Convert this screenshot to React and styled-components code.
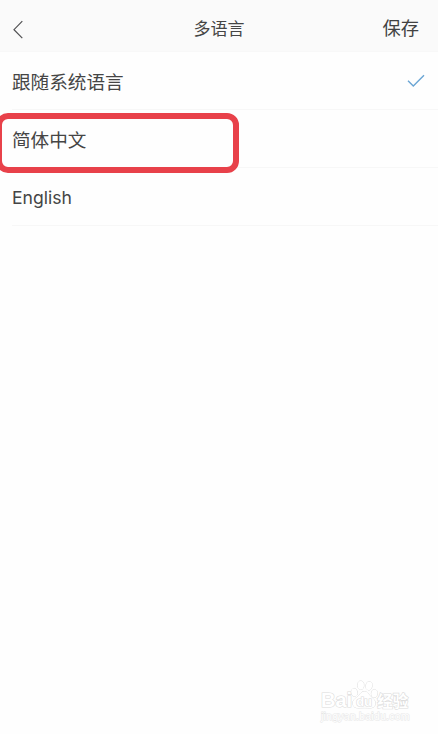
import React from "react";
import styled, { createGlobalStyle } from "styled-components";

const languages = [
  { id: "system", label: "跟随系统语言", selected: true },
  { id: "zh", label: "简体中文", marked: true },
  { id: "en", label: "English", latin: true },
];

const App = () => {
  return (
    <Page>
      <GlobalStyle />
      <Header>
        <BackButton aria-label="返回">
          <svg width="12" height="20" viewBox="0 0 12 20">
            <path d="M10.3 1.2L2 9.7L10.3 18.2" fill="none" stroke="#505052" strokeWidth="1.2" />
          </svg>
        </BackButton>
        <Title>多语言</Title>
        <SaveButton>保存</SaveButton>
      </Header>
      <List>
        {languages.map((language) => (
          <Row key={language.id}>
            <Label $latin={language.latin}>{language.label}</Label>
            {language.selected && (
              <svg width="18" height="14" viewBox="0 0 18 14">
                <path d="M1 6.7L6.3 12L17 1.2" fill="none" stroke="#6aa5d4" strokeWidth="1.4" />
              </svg>
            )}
            {language.marked && <Marker />}
          </Row>
        ))}
      </List>
      <Watermark>
        <Brand>
          <BrandText>Bai</BrandText>
          <Paw>
            <svg width="28" height="29" viewBox="0 0 28 29">
              <g fill="#fff" stroke="#d8d8d8" strokeWidth="0.9">
                <ellipse cx="4.3" cy="12.5" rx="3" ry="4" transform="rotate(-12 4.3 12.5)" />
                <ellipse cx="10.8" cy="5.2" rx="3.1" ry="4.2" />
                <ellipse cx="19" cy="5.8" rx="3.1" ry="4.2" transform="rotate(12 19 5.8)" />
                <ellipse cx="24.3" cy="13.5" rx="3" ry="4" transform="rotate(8 24.3 13.5)" />
                <path d="M14.3 11.5C10.7 11.5 9.8 15.3 6.6 17.5C3.2 20 1.9 22 3.3 25.4C4.8 29 9.5 27.8 14.2 27.8C18.9 27.8 23.2 29 24.8 25.5C26.2 22.2 24.8 19.9 21.7 17.5C18.9 15.2 17.8 11.5 14.3 11.5Z" />
              </g>
            </svg>
            <PawText>du</PawText>
          </Paw>
          <BrandText $chinese>经验</BrandText>
        </Brand>
        <Site>jingyan.baidu.com</Site>
      </Watermark>
    </Page>
  );
};

export default App;

const GlobalStyle = createGlobalStyle`
  * {
    box-sizing: border-box;
  }
  body {
    margin: 0;
    background: #fefefe;
    font-family: "Noto Sans CJK SC", sans-serif;
    color: #454545;
  }
`;

const Page = styled.div`
  position: relative;
  height: 734px;
  overflow: hidden;
`;

const Header = styled.header`
  display: grid;
  grid-template-columns: 1fr auto 1fr;
  align-items: center;
  height: 52px;
  padding: 4px 19px 0 12px;
  background: #fafafa;
  border-bottom: 1px solid #f8f8f8;
`;

const BackButton = styled.button`
  display: flex;
  padding: 4px 0 0;
  border: 0;
  background: none;
`;

const Title = styled.h1`
  margin: 0 0 0 7px;
  font-size: 17px;
  font-weight: 400;
  line-height: 26px;
`;

const SaveButton = styled.button`
  justify-self: end;
  padding: 0 0 1px;
  border: 0;
  background: none;
  color: #414141;
  font: 400 18.3px/26px "Noto Sans CJK SC", sans-serif;
`;

const List = styled.ul`
  margin: 0;
  padding: 0 0 0 12px;
  list-style: none;
`;

const Row = styled.li`
  position: relative;
  display: flex;
  align-items: center;
  justify-content: space-between;
  height: 58px;
  padding-right: 13px;
  border-bottom: 1px solid #f7f7f7;
`;

const Label = styled.span`
  padding-top: ${(props) => (props.$latin ? "2px" : "0")};
  font-family: ${(props) => (props.$latin ? "Inter" : '"Noto Sans CJK SC"')}, sans-serif;
  font-size: ${(props) => (props.$latin ? "17.6px" : "18.6px")};
  line-height: 28px;
`;

/* red frame drawn over the row, running off the left edge */
const Marker = styled.span`
  position: absolute;
  top: 3px;
  left: -16px;
  width: 243px;
  height: 60px;
  border: 6px solid #e8414a;
  border-radius: 12px;
`;

const Watermark = styled.div`
  position: absolute;
  left: 321px;
  top: 680px;
  width: 92px;
  color: #fff;
  -webkit-text-stroke: 1.2px #dcdcdc;
  paint-order: stroke fill;
`;

const Brand = styled.div`
  display: flex;
  align-items: flex-end;
  height: 29px;
`;

const BrandText = styled.span`
  font-family: ${(props) => (props.$chinese ? '"Noto Sans CJK SC"' : '"Liberation Sans"')}, sans-serif;
  font-size: ${(props) => (props.$chinese ? "15.5px" : "20px")};
  font-weight: 700;
  line-height: ${(props) => (props.$chinese ? "17px" : "18px")};
`;

const Paw = styled.span`
  position: relative;
  display: flex;
  margin: 0 -1px 0 -2px;
`;

const PawText = styled.span`
  position: absolute;
  left: 6px;
  bottom: 0;
  font: 700 13px/15px "Liberation Sans", sans-serif;
`;

const Site = styled.div`
  font: 400 10.6px/14px "Liberation Sans", sans-serif;
  letter-spacing: 0.2px;
  -webkit-text-stroke: 1px #e6e6e6;
`;
